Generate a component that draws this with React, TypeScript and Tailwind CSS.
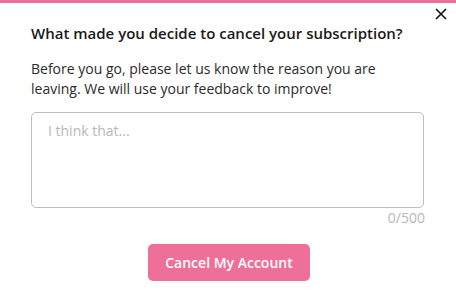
import React from "react";

export default function App() {
  return (
    <div className="w-[456px] h-[302px] bg-white flex flex-col" style={{ fontFamily: '"Open Sans", sans-serif' }}>
      <div className="h-[3px] bg-[#ee7096]" />
      <div className="relative flex-1 px-[31px] pt-[19px]">
        <button className="absolute right-[9px] top-[5px] text-[#111]">
          <svg width="12" height="12" viewBox="0 0 12 12" fill="none" stroke="currentColor" strokeWidth="1.6">
            <path d="M1 1L11 11M11 1L1 11" />
          </svg>
        </button>
        <h2 className="text-[15px] font-semibold text-[#1a1a1a] leading-[22px]">
          What made you decide to cancel your subscription?
        </h2>
        <p className="mt-[15px] text-[14px] text-[#2b2b2b] leading-[20px]">
          Before you go, please let us know the reason you are leaving. We will use your feedback to improve!
        </p>
        <div className="mt-[13px]">
          <textarea
            placeholder="I think that..."
            className="block w-[393px] h-[96px] resize-none rounded-[5px] border border-[#bdbdbd] px-[16px] py-[8px] text-[14px] leading-[20px] placeholder:text-[#b5b9bd] outline-none"
          />
          <div className="text-right text-[14px] text-[#b5b9bd] leading-[18px] mt-[1px]">0/500</div>
        </div>
        <div className="flex justify-center mt-[17px] pl-[2px]">
          <button className="w-[162px] h-[37px] rounded-[5px] bg-[#ee7099] text-white text-[14px] font-semibold">
            Cancel My Account
          </button>
        </div>
      </div>
    </div>
  );
}
